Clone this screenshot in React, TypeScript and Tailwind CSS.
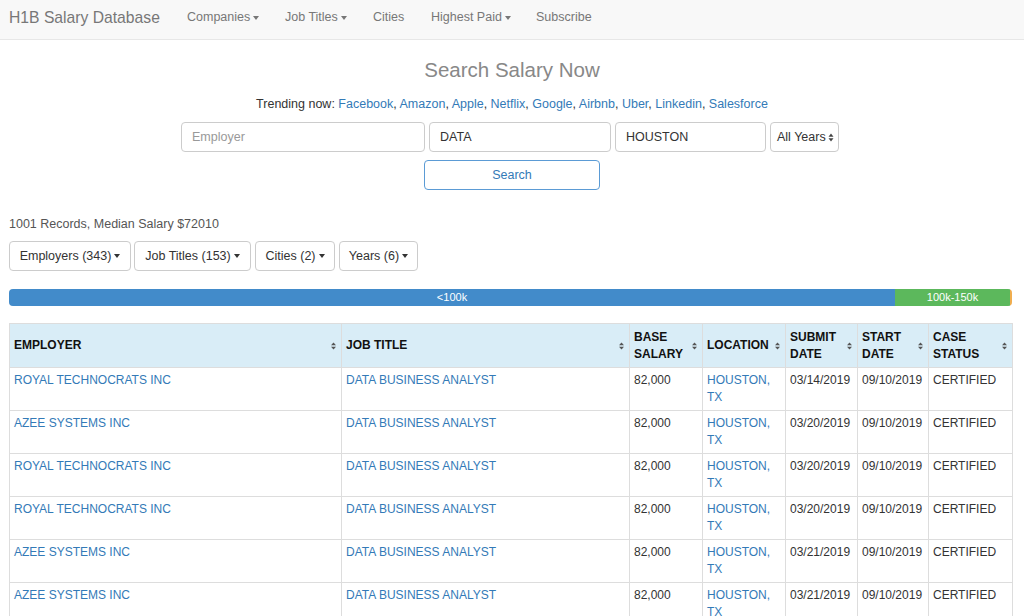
import React from "react";

const Caret = () => (
  <span className="inline-block w-0 h-0 ml-[3px] align-middle border-t-[4px] border-t-current border-x-[3.5px] border-x-transparent" />
);

const SortIcon = () => (
  <svg width="7" height="10" viewBox="0 0 7 10" className="shrink-0">
    <path d="M3.5 1.5 L6 4.3 L1 4.3 Z" fill="#555" />
    <path d="M3.5 8.5 L6 5.7 L1 5.7 Z" fill="#555" />
  </svg>
);

const rows = [
  ["ROYAL TECHNOCRATS INC", "03/14/2019"],
  ["AZEE SYSTEMS INC", "03/20/2019"],
  ["ROYAL TECHNOCRATS INC", "03/20/2019"],
  ["ROYAL TECHNOCRATS INC", "03/20/2019"],
  ["AZEE SYSTEMS INC", "03/21/2019"],
  ["AZEE SYSTEMS INC", "03/21/2019"],
  ["AZEE SYSTEMS INC", "03/21/2019"],
];

const trending = ["Facebook", "Amazon", "Apple", "Netflix", "Google", "Airbnb", "Uber", "Linkedin", "Salesforce"];

function Th({ children, w }: { children: React.ReactNode; w: string }) {
  return (
    <th className={`${w} border border-[#ddd] px-[4px] py-[4px] text-left align-middle font-bold text-[12px] leading-[17px] text-[#111]`}>
      <div className="flex items-center justify-between gap-[2px]">
        <span>{children}</span>
        <SortIcon />
      </div>
    </th>
  );
}

const td = "border border-[#ddd] px-[4px] pt-[4px] pb-[4px]";

export default function App() {
  return (
    <div className="w-[1024px] h-[616px] overflow-hidden bg-white text-[12.5px] text-[#333]" style={{ fontFamily: '"Liberation Sans", Arial, sans-serif' }}>
      {/* Navbar */}
      <div className="h-[40px] bg-[#f8f8f8] border-b border-[#e7e7e7] flex items-center pl-[9px] pb-[4px] text-[#777]">
        <span className="text-[15.7px] w-[178px]">H1B Salary Database</span>
        <span className="w-[98px]">Companies<Caret /></span>
        <span className="w-[88px]">Job Titles<Caret /></span>
        <span className="w-[58px]">Cities</span>
        <span className="w-[105px]">Highest Paid<Caret /></span>
        <span>Subscribe</span>
      </div>

      {/* Search */}
      <div className="flex flex-col items-center">
        <div className="mt-[17px] text-[20.5px] leading-[26px] text-[#888]">Search Salary Now</div>
        <div className="mt-[13px] leading-[16px]">
          Trending now:{" "}
          {trending.map((t, i) => (
            <React.Fragment key={t}>
              <span className="text-[#337ab7]">{t}</span>
              {i < trending.length - 1 ? ", " : ""}
            </React.Fragment>
          ))}
        </div>
        <div className="mt-[10px] flex gap-[4px] pr-[4px]">
          <div className="w-[244px] h-[30px] border border-[#ccc] rounded-[4px] flex items-center px-[10px] text-[#999]">Employer</div>
          <div className="w-[182px] h-[30px] border border-[#ccc] rounded-[4px] flex items-center px-[10px] text-[#333]">DATA</div>
          <div className="w-[151px] h-[30px] border border-[#ccc] rounded-[4px] flex items-center px-[10px] text-[#333]">HOUSTON</div>
          <div className="w-[69px] h-[30px] border border-[#ccc] rounded-[4px] flex items-center pl-[6px] pr-[4px] justify-between text-[#333]">
            <span>All Years</span>
            <svg width="6" height="11" viewBox="0 0 6 11">
              <path d="M3 1.5 L5.5 4.7 L0.5 4.7 Z" fill="#444" />
              <path d="M3 9.5 L5.5 6.3 L0.5 6.3 Z" fill="#444" />
            </svg>
          </div>
        </div>
        <div className="mt-[8px] w-[176px] h-[30px] border border-[#5b9bd5] rounded-[4px] flex items-center justify-center text-[#337ab7]">
          Search
        </div>
      </div>

      {/* Records */}
      <div className="px-[9px]">
        <div className="mt-[26px] leading-[16px] text-[#555]">1001 Records, Median Salary $72010</div>
        <div className="mt-[9px] flex">
          {[
            ["Employers (343)", "w-[122px] mr-[3px]"],
            ["Job Titles (153)", "w-[117px] mr-[4px]"],
            ["Cities (2)", "w-[80px] mr-[4px]"],
            ["Years (6)", "w-[79px]"],
          ].map(([b, w]) => (
            <div key={b} className={`${w} h-[30px] border border-[#ccc] rounded-[4px] bg-white flex items-center justify-center text-[#333]`}>
              {b}
              <Caret />
            </div>
          ))}
        </div>

        {/* Progress bar */}
        <div className="mt-[18px] h-[17px] w-[1003px] rounded-[4px] overflow-hidden flex text-white text-[11px] leading-[17px] bg-[#f5f5f5]">
          <div className="w-[886px] bg-[#428bca] text-center">&lt;100k</div>
          <div className="w-[115px] bg-[#5cb85c] text-center">100k-150k</div>
          <div className="w-[2px] bg-[#f0ad4e]" />
        </div>

        {/* Table */}
        <table className="mt-[17px] w-[1003px] table-fixed border-collapse text-[12px]">
          <thead>
            <tr className="bg-[#d9edf7] h-[44px]">
              <Th w="w-[332px]">EMPLOYER</Th>
              <Th w="w-[288px]">JOB TITLE</Th>
              <Th w="w-[73px]">BASE<br />SALARY</Th>
              <Th w="w-[83px]">LOCATION</Th>
              <Th w="w-[72px]">SUBMIT<br />DATE</Th>
              <Th w="w-[71px]">START<br />DATE</Th>
              <Th w="w-[84px]">CASE<br />STATUS</Th>
            </tr>
          </thead>
          <tbody>
            {rows.map(([emp, date], i) => (
              <tr key={i} className="align-top leading-[17px]">
                <td className={`${td} text-[#337ab7]`}>{emp}</td>
                <td className={`${td} text-[#337ab7]`}>DATA BUSINESS ANALYST</td>
                <td className={td}>82,000</td>
                <td className={`${td} text-[#337ab7]`}>HOUSTON,<br />TX</td>
                <td className={td}>{date}</td>
                <td className={td}>09/10/2019</td>
                <td className={td}>CERTIFIED</td>
              </tr>
            ))}
          </tbody>
        </table>
      </div>
    </div>
  );
}
